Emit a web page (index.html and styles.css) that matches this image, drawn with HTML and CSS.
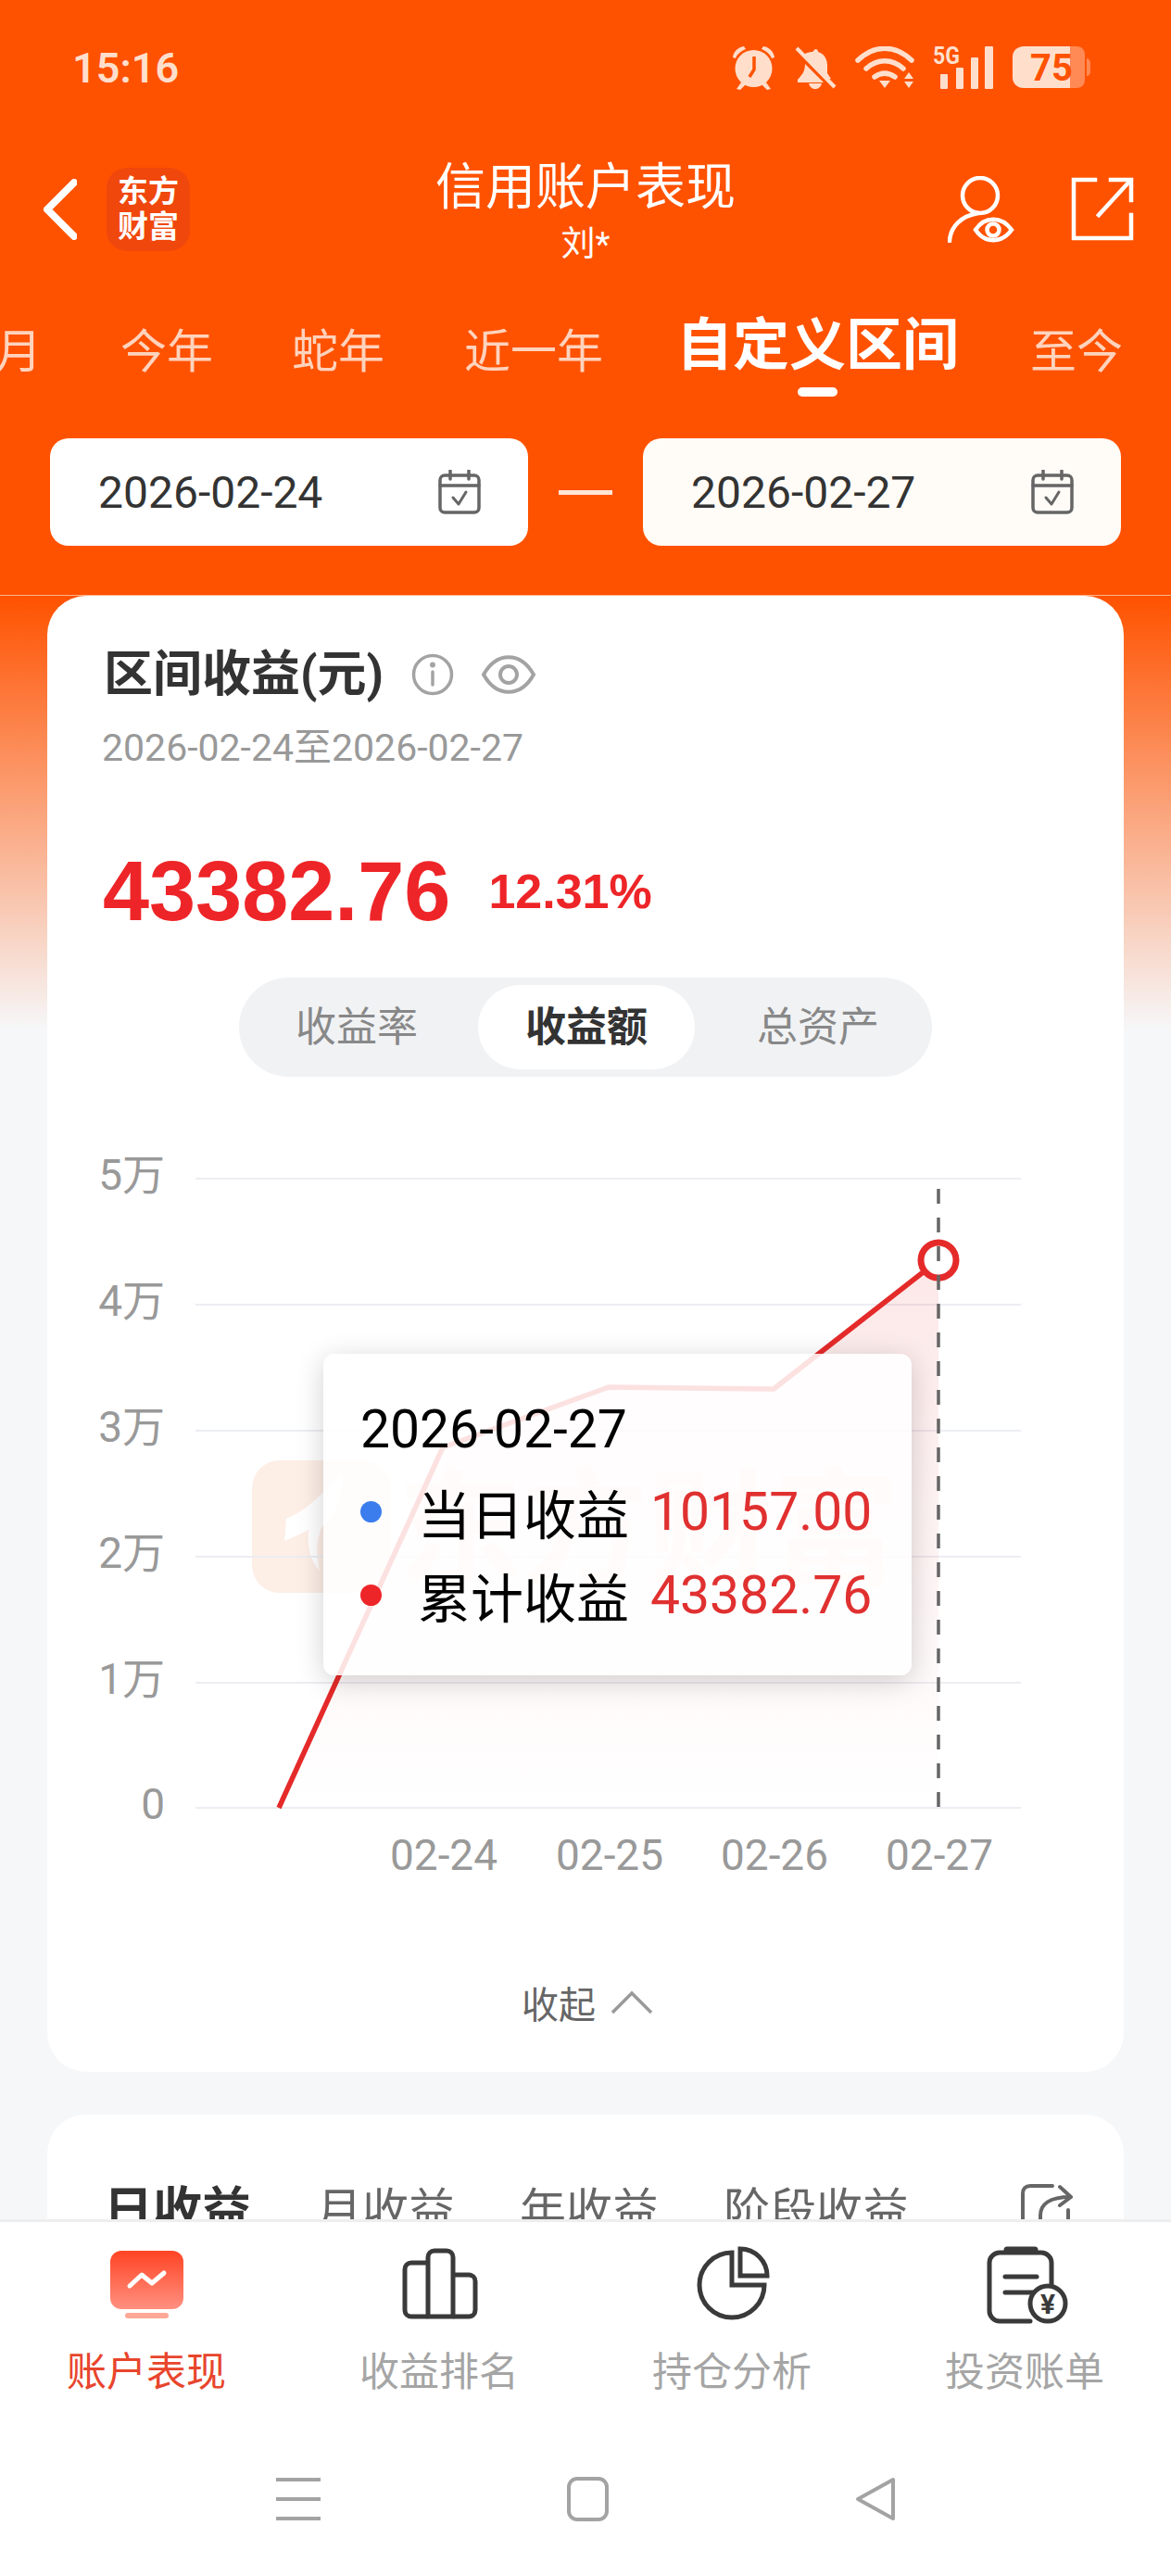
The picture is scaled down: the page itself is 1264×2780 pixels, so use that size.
FILE: index.html
```html
<!DOCTYPE html>
<html lang="zh-CN">
<head>
    <meta charset="UTF-8">
    <title>信用账户表现</title>
    <link rel="stylesheet" href="styles.css">
</head>
<body>
<div id="phone">
    <header id="top-panel">
        <div class="status-bar">
            <span class="status-time">15:16</span>
            <div class="status-icons">
                <svg width="47" height="48" viewBox="790 50 47 48" fill="#ffdfcc">
                    <circle cx="813.5" cy="75" r="20"/>
                    <path d="M791 63c1-7 6-11 12-12l2 3c-5 2-9 5-11 10zM836 63c-1-7-6-11-12-12l-2 3c5 2 9 5 11 10z"/>
                    <path d="M800 90l-5 7 4 1 6-6zM827 90l5 7-4 1-6-6z"/>
                    <path d="M814 62v14l-5 8" fill="none" stroke="#ff5200" stroke-width="3.5"/>
                </svg>
                <svg width="46" height="46" viewBox="857 51 46 46" fill="#ffdfcc">
                    <path d="M880 54c2 0 3 1 3 3 7 2 10 8 10 15v8l4 6-5 1-26-26c4-3 7-4 11-4zM869 70l20 20h-28v-3l5-6c2-3 3-7 3-11zM873 91h14c-1 4-4 6-7 6s-6-2-7-6z"/>
                    <path d="M860 53l41 42" stroke="#ffdfcc" stroke-width="4" fill="none"/>
                </svg>
                <svg width="64" height="46" viewBox="923 51 64 46" fill="none" stroke="#ffdfcc" stroke-linecap="round" stroke-width="5.5">
                    <path d="M926 66c18-17 40-17 58 0"/>
                    <path d="M935 75c12-11 28-11 40 0"/>
                    <path d="M944 84c7-5 15-5 22 0"/>
                    <path d="M949 88h12l-6 8z" fill="#ffdfcc" stroke="none"/>
                    <path d="M981 79l5 7h-10zM976 89h10l-5 7z" fill="#ffdfcc" stroke="none"/>
                </svg>
                <svg width="66" height="48" viewBox="1006 50 66 48">
                    <text x="1006" y="70" class="status-5g" textLength="29" lengthAdjust="spacingAndGlyphs">5G</text>
                    <g fill="#ffdfcc">
                        <rect x="1014" y="81" width="8" height="16" rx="1"/>
                        <rect x="1031" y="74" width="8" height="23" rx="1"/>
                        <rect x="1047" y="63" width="8" height="34" rx="1"/>
                        <rect x="1062" y="51" width="9" height="46" rx="1"/>
                    </g>
                </svg>
                <svg width="84" height="46" viewBox="1093 52 84 46">
                    <path d="M1147 52h15c6 0 9 4 9 9v27c0 5-3 9-9 9h-15z" fill="#ff8a55"/>
                    <path d="M1173 65c2 0 4 2 4 5v9c0 3-2 5-4 5z" fill="#ff8a55"/>
                    <path d="M1105 52h50v45h-50c-7 0-12-5-12-11v-23c0-6 5-11 12-11z" fill="#ffdfcc"/>
                    <text x="1135" y="89" text-anchor="middle" class="status-batt">75</text>
                </svg>
            </div>
        </div>
        <div class="nav-row">
            <div class="nav-left">
                <svg width="36" height="66" viewBox="0 0 36 66" fill="none" stroke="#fff" stroke-width="8" stroke-linecap="round" stroke-linejoin="round">
                    <path d="M33 4L4 33l29 29"/>
                </svg>
                <div class="app-logo">东方<br>财富</div>
            </div>
            <div class="nav-title">
                <div class="nav-title-main">信用账户表现</div>
                <div class="nav-title-sub">刘*</div>
            </div>
            <div class="nav-right">
                <svg width="72" height="72" viewBox="1024 188 72 72" fill="none" stroke="#fff" stroke-width="4.5" stroke-linecap="round">
                    <circle cx="1059" cy="209" r="19"/>
                    <path d="M1026 258c1-16 13-27 31-30"/>
                    <path d="M1054 246c10-15 28-15 39 0-11 15-29 15-39 0z"/>
                    <circle cx="1073" cy="246" r="6.5"/>
                </svg>
                <svg width="70" height="70" viewBox="1155 190 70 70" fill="none" stroke="#fff" stroke-width="4.5" stroke-linecap="square">
                    <path d="M1182 193h-23v63h62v-25"/>
                    <path d="M1199 193h22v22"/>
                    <path d="M1186 231l34-37"/>
                </svg>
            </div>
        </div>
        <div class="range-tabs">
            <span class="range-tab">月</span>
            <span class="range-tab">今年</span>
            <span class="range-tab">蛇年</span>
            <span class="range-tab range-tab-wide">近一年</span>
            <span class="range-tab range-tab-active">自定义区间<i class="range-tab-bar"></i></span>
            <span class="range-tab">至今</span>
        </div>
        <div class="date-row">
            <div class="date-box">
                <span>2026-02-24</span>
                <svg width="48" height="48" viewBox="0 0 48 48" fill="none" stroke="#666" stroke-width="3.5" stroke-linecap="round" stroke-linejoin="round">
                    <rect x="3" y="6" width="42" height="40" rx="5"/>
                    <path d="M3 17h42M14 1v9M34 1v9"/>
                    <path d="M17 30l6 7 8-13" stroke-width="3"/>
                </svg>
            </div>
            <i class="date-dash"></i>
            <div class="date-box date-box-end">
                <span>2026-02-27</span>
                <svg width="48" height="48" viewBox="0 0 48 48" fill="none" stroke="#666" stroke-width="3.5" stroke-linecap="round" stroke-linejoin="round">
                    <rect x="3" y="6" width="42" height="40" rx="5"/>
                    <path d="M3 17h42M14 1v9M34 1v9"/>
                    <path d="M17 30l6 7 8-13" stroke-width="3"/>
                </svg>
            </div>
        </div>
    </header>

    <main id="content">
        <section class="card card-profit">
            <div class="card-head">
                <h2 class="card-title">区间收益(元)</h2>
                <svg width="46" height="46" viewBox="0 0 46 46" fill="none" stroke="#a3a3a3" stroke-width="3.5" stroke-linecap="round">
                    <circle cx="23" cy="23" r="20.5"/>
                    <path d="M23 20v14"/>
                    <circle cx="23" cy="12.5" r="1.2" fill="#a3a3a3"/>
                </svg>
                <svg width="60" height="44" viewBox="0 0 60 44" fill="none" stroke="#a3a3a3" stroke-width="4">
                    <path d="M3 22c14-25 40-25 54 0-14 25-40 25-54 0z"/>
                    <circle cx="30" cy="22" r="9"/>
                </svg>
            </div>
            <div class="card-dates">2026-02-24至2026-02-27</div>
            <div class="profit-row">
                <span class="profit-amount">43382.76</span>
                <span class="profit-rate">12.31%</span>
            </div>
            <div class="seg-control">
                <span class="seg-item seg-item-left">收益率</span>
                <span class="seg-item seg-item-active">收益额</span>
                <span class="seg-item seg-item-right">总资产</span>
            </div>
            <div class="chart">
                <svg class="chart-svg" width="1161" height="800" viewBox="52 1240 1161 800">
                    <defs>
                        <linearGradient id="area-fill" x1="0" y1="0" x2="0" y2="1">
                            <stop offset="0" stop-color="#e62a2a" stop-opacity="0.11"/>
                            <stop offset="1" stop-color="#e62a2a" stop-opacity="0"/>
                        </linearGradient>
                    </defs>
                    <!-- watermark -->
                    <rect x="273" y="1577" width="150" height="143" rx="30" fill="#fdeee6"/>
                    <path d="M310 1640c20-8 40-26 60-52 2 24-4 44-22 62-6 14-6 28-2 46-10-10-14-26-12-44-8 4-16 8-26 12z" fill="#fff"/>
                    <text x="430" y="1700" class="chart-mark">东方财富</text>
                    <!-- grid -->
                    <g stroke="#eceef3" stroke-width="2">
                        <path d="M212 1273H1103"/>
                        <path d="M212 1409H1103"/>
                        <path d="M212 1545H1103"/>
                        <path d="M212 1681H1103"/>
                        <path d="M212 1817H1103"/>
                        <path d="M212 1952H1103"/>
                    </g>
                    <g class="chart-label" text-anchor="end">
                        <text x="179" y="1285">5万</text>
                        <text x="179" y="1421">4万</text>
                        <text x="179" y="1557">3万</text>
                        <text x="179" y="1693">2万</text>
                        <text x="179" y="1829">1万</text>
                        <text x="179" y="1964">0</text>
                    </g>
                    <g class="chart-label" text-anchor="middle">
                        <text x="480" y="2019">02-24</text>
                        <text x="659" y="2019">02-25</text>
                        <text x="837" y="2019">02-26</text>
                        <text x="1015" y="2019">02-27</text>
                    </g>
                    <path d="M302 1952L479 1563 658 1498 836 1500 1014 1361V1952z" fill="url(#area-fill)"/>
                    <path d="M302 1952L479 1563 658 1498 836 1500 1014 1361" fill="none" stroke="#e52a2a" stroke-width="5.5" stroke-linejoin="round"/>
                    <circle cx="1014" cy="1361" r="19" fill="#fff" stroke="#e52a2a" stroke-width="7"/>
                    <path d="M1014 1284V1952" stroke="#666" stroke-width="3.5" stroke-dasharray="16 15"/>
                </svg>
                <div class="chart-tip">
                    <div class="tip-date">2026-02-27</div>
                    <div class="tip-row">
                        <i class="tip-dot tip-dot-blue"></i>
                        <span class="tip-name">当日收益</span>
                        <span class="tip-value">10157.00</span>
                    </div>
                    <div class="tip-row">
                        <i class="tip-dot tip-dot-red"></i>
                        <span class="tip-name">累计收益</span>
                        <span class="tip-value">43382.76</span>
                    </div>
                </div>
            </div>
            <div class="collapse-row">
                <span>收起</span>
                <svg width="46" height="26" viewBox="0 0 46 26" fill="none" stroke="#999" stroke-width="3.5">
                    <path d="M2 24L23 3l21 21"/>
                </svg>
            </div>
        </section>

        <section class="card card-income">
            <div class="income-tabs">
                <span class="income-tab income-tab-active">日收益</span>
                <span class="income-tab">月收益</span>
                <span class="income-tab">年收益</span>
                <span class="income-tab">阶段收益</span>
                <svg class="income-share" width="56" height="60" viewBox="0 0 56 60" fill="none" stroke="#666" stroke-width="4" stroke-linecap="round" stroke-linejoin="round">
                    <path d="M2 60V10c0-5 3-8 8-8h24"/>
                    <path d="M21 60V34c0-12 10-20 32-20"/>
                    <path d="M42 3l12 11-12 9"/>
                    <path d="M51 28v32"/>
                </svg>
            </div>
        </section>
    </main>

    <footer id="bottom-panel">
        <nav class="tab-bar">
            <div class="tab-item tab-item-active">
                <svg width="100" height="90" viewBox="108 2422 100 90">
                    <defs>
                        <linearGradient id="tab-fill" x1="0" y1="0" x2="0" y2="1">
                            <stop offset="0" stop-color="#ff4424"/>
                            <stop offset="1" stop-color="#ff9080"/>
                        </linearGradient>
                    </defs>
                    <rect x="119" y="2429" width="79" height="63" rx="12" fill="url(#tab-fill)"/>
                    <rect x="135" y="2496" width="47" height="6" rx="3" fill="#ffa898"/>
                    <path d="M140 2467l13-12 11 9 13-11" fill="none" stroke="#fff" stroke-width="5" stroke-linecap="round" stroke-linejoin="round"/>
                </svg>
                <span>账户表现</span>
            </div>
            <div class="tab-item">
                <svg width="100" height="90" viewBox="423 2422 100 90" fill="none" stroke="#3a3a3a" stroke-width="5" stroke-linejoin="round">
                    <path d="M461 2500h-18c-4 0-7-3-7-7v-44c0-4 3-7 7-7h18"/>
                    <path d="M461 2500v-64c0-4 3-7 7-7h13c4 0 7 3 7 7v64z"/>
                    <path d="M488 2455h17c4 0 7 3 7 7v31c0 4-3 7-7 7h-17"/>
                </svg>
                <span>收益排名</span>
            </div>
            <div class="tab-item">
                <svg width="100" height="90" viewBox="740 2422 100 90" fill="none" stroke="#3a3a3a" stroke-width="5" stroke-linejoin="miter">
                    <path d="M790 2431V2466H825A35 35 0 1 1 790 2431z"/>
                    <path d="M799 2427V2456H828A29 29 0 0 0 799 2427z"/>
                </svg>
                <span>持仓分析</span>
            </div>
            <div class="tab-item">
                <svg width="100" height="90" viewBox="1056 2422 100 90" fill="none" stroke="#3a3a3a" stroke-width="5" stroke-linecap="round">
                    <path d="M1112 2505h-33c-6 0-11-5-11-11v-52c0-6 5-11 11-11h45c6 0 11 5 11 11v26"/>
                    <path d="M1087 2428h30" stroke-width="7"/>
                    <path d="M1085 2457h34M1085 2474h34"/>
                    <circle cx="1131" cy="2486" r="19" fill="#fff"/>
                    <text x="1131" y="2497" text-anchor="middle" class="tab-yen">¥</text>
                </svg>
                <span>投资账单</span>
            </div>
        </nav>
        <div class="sys-nav">
            <svg width="48" height="48" viewBox="0 0 48 48" stroke="#a3a3a3" stroke-width="4">
                <path d="M0 3h48M0 24h48M0 45h48"/>
            </svg>
            <svg width="45" height="48" viewBox="0 0 45 48" fill="none" stroke="#a3a3a3" stroke-width="4">
                <rect x="2" y="2" width="41" height="44" rx="9"/>
            </svg>
            <svg width="43" height="48" viewBox="0 0 43 48" fill="none" stroke="#a3a3a3" stroke-width="4" stroke-linejoin="round">
                <path d="M41 3v42L3 24z"/>
            </svg>
        </div>
    </footer>
</div>
</body>
</html>
```

FILE: styles.css
```css
* {
    box-sizing: border-box;
}
body {
    margin: 0;
    padding: 0;
    background: #fff;
    color: #333;
    font-family: Roboto, "Noto Sans CJK SC", sans-serif;
}
#phone {
    width: 1264px;
    height: 2780px;
    display: flex;
    flex-direction: column;
    overflow: hidden;
}
svg {
    display: block;
    flex: none;
}

/* top panel */
#top-panel {
    flex: none;
    height: 643px;
    background: #ff5200;
    border-bottom: 1px solid #ffb48a;
}
.status-bar {
    height: 146px;
    display: flex;
    align-items: center;
    justify-content: space-between;
    padding: 0 87px 0 78px;
}
.status-time {
    font-size: 45px;
    font-weight: 600;
    color: #ffdfcc;
}
.status-icons {
    display: flex;
    align-items: center;
    gap: 20px;
}
.status-5g {
    font: 700 26px Roboto, sans-serif;
    fill: #ffdfcc;
}
.status-batt {
    font: 700 40px Roboto, sans-serif;
    fill: #ff5200;
}
.nav-row {
    height: 160px;
    display: grid;
    grid-template-columns: 1fr auto 1fr;
}
.nav-left {
    display: flex;
    align-items: center;
    gap: 32px;
    padding-left: 47px;
}
.app-logo {
    width: 90px;
    height: 90px;
    border-radius: 22px;
    background: #f0470c;
    color: #fff;
    font-size: 33px;
    font-weight: 700;
    line-height: 38px;
    text-align: center;
    padding-top: 7px;
}
.nav-title {
    padding-top: 27px;
    text-align: center;
    color: #fff;
}
.nav-title-main {
    font-size: 54px;
    line-height: 60px;
}
.nav-title-sub {
    font-size: 37px;
    line-height: 44px;
    margin-top: 9px;
}
.nav-right {
    display: flex;
    align-items: center;
    justify-content: flex-end;
    gap: 60px;
    padding-right: 39px;
}

/* range tabs */
.range-tabs {
    height: 122px;
    display: flex;
    align-items: flex-start;
    gap: 85px;
    margin-left: -5px;
    white-space: nowrap;
}
.range-tab {
    font-size: 50px;
    line-height: 64px;
    margin-top: 42px;
    color: #ffd3bd;
}
.range-tab-wide {
    margin-left: 1px;
}
.range-tab-active {
    display: flex;
    flex-direction: column;
    align-items: center;
    font-size: 61px;
    line-height: 70px;
    font-weight: 700;
    margin: 32px -8px 0 -6px;
    color: #fff;
}
.range-tab-bar {
    width: 43px;
    height: 10px;
    border-radius: 5px;
    background: #fff;
    margin-top: 10px;
}

/* dates */
.date-row {
    display: flex;
    align-items: center;
    justify-content: space-between;
    padding: 0 54px;
    margin-top: 45px;
}
.date-box {
    width: 516px;
    height: 116px;
    display: flex;
    align-items: center;
    justify-content: space-between;
    padding: 0 50px 0 52px;
    border-radius: 20px;
    background: #fff;
    font-size: 48px;
    color: #333;
}
.date-box-end {
    background: #fffbf7;
}
.date-dash {
    width: 58px;
    height: 5px;
    background: #ffe5d5;
}

/* content */
#content {
    flex: 1;
    min-height: 0;
    overflow: hidden;
    padding: 0 51px;
    background: linear-gradient(#ff5200 0, #f6f7f9 468px);
}
.card {
    background: #fff;
    border-radius: 42px;
}
.card-profit {
    height: 1593px;
    padding-top: 55px;
}
.card-head {
    display: flex;
    align-items: center;
    padding-left: 61px;
    height: 60px;
}
.card-title {
    margin: 0 30px 0 0;
    font-size: 53px;
    line-height: 60px;
    font-weight: 700;
    color: #333;
}
.card-head svg + svg {
    margin-left: 29px;
}
.card-dates {
    margin-top: 25px;
    padding-left: 59px;
    font-size: 41px;
    line-height: 48px;
    color: #999;
}
.profit-row {
    display: flex;
    align-items: center;
    gap: 41px;
    height: 100px;
    margin-top: 81px;
    padding-left: 60px;
    font-family: "Liberation Sans", "Noto Sans CJK SC", sans-serif;
    font-weight: 700;
    color: #ee2528;
}
.profit-amount {
    font-size: 90px;
}
.profit-rate {
    font-size: 52px;
}
.seg-control {
    display: flex;
    width: 748px;
    height: 107px;
    margin: 43px 0 0 207px;
    padding: 8px;
    border-radius: 54px;
    background: #f1f2f4;
}
.seg-item {
    flex: 1;
    text-align: center;
    font-size: 44px;
    line-height: 93px;
    color: #888;
}
.seg-item-left {
    flex: none;
    width: 250px;
    padding-right: 12px;
}
.seg-item-right {
    padding-left: 18px;
}
.seg-item-active {
    flex: none;
    width: 234px;
    height: 91px;
    border-radius: 46px;
    background: #fff;
    font-weight: 700;
    color: #333;
}

/* chart */
.chart {
    position: relative;
    margin-top: 77px;
}
.chart-label {
    font-size: 46px;
    fill: #999;
}
.chart-mark {
    font-size: 135px;
    font-weight: 700;
    fill: #fdeee6;
}
.chart-tip {
    position: absolute;
    left: 298px;
    top: 222px;
    width: 635px;
    height: 347px;
    padding: 47px 0 0 40px;
    border-radius: 12px;
    background: rgba(255, 255, 255, 0.86);
    box-shadow: 0 6px 30px rgba(0, 0, 0, 0.18);
    color: #000;
    font-size: 57px;
}
.tip-date {
    line-height: 70px;
    margin-bottom: 8px;
}
.tip-row {
    display: flex;
    align-items: center;
    height: 90px;
}
.tip-dot {
    width: 23px;
    height: 23px;
    border-radius: 50%;
    margin-right: 39px;
}
.tip-dot-blue {
    background: #3b7ded;
}
.tip-dot-red {
    background: #ee2528;
}
.tip-value {
    margin-left: 23px;
    color: #e03030;
}
.collapse-row {
    display: flex;
    align-items: center;
    justify-content: center;
    gap: 16px;
    margin-top: 97px;
    height: 50px;
    padding-left: 4px;
    font-size: 40px;
    color: #666;
}

/* second card */
.card-income {
    margin-top: 46px;
    height: 300px;
}
.income-tabs {
    display: flex;
    align-items: flex-start;
    gap: 70px;
    padding: 74px 55px 0 61px;
    font-size: 50px;
    line-height: 60px;
    color: #666;
}
.income-tab-active {
    font-size: 53px;
    font-weight: 700;
    color: #333;
}
.income-share {
    margin: 1px 0 0 auto;
}

/* bottom panel */
#bottom-panel {
    flex: none;
    height: 385px;
    background: #fff;
    border-top: 3px solid #eee;
}
.tab-bar {
    display: grid;
    grid-template-columns: repeat(4, 1fr);
    padding-top: 24px;
}
.tab-item {
    display: flex;
    flex-direction: column;
    align-items: center;
    font-size: 43px;
    line-height: 56px;
    color: #a5a5a5;
}
.tab-item span {
    margin-top: 20px;
}
.tab-item-active {
    color: #e8452c;
}
.tab-yen {
    font: 700 30px Roboto, sans-serif;
    fill: #3a3a3a;
    stroke: none;
}
.sys-nav {
    display: flex;
    justify-content: center;
    gap: 266px;
    margin-top: 85px;
}
```
